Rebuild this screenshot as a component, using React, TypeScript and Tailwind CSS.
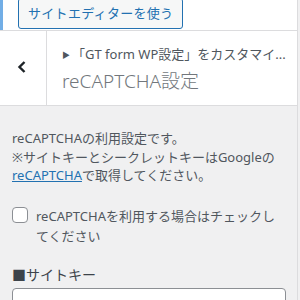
import React from 'react';

const font = { fontFamily: '"Noto Sans", "Noto Sans CJK JP", sans-serif' };

export default function App() {
  return (
    <div className="w-[300px] h-[300px] overflow-hidden bg-[#f0f0f1] flex" style={font}>
      <div className="w-[298px] shrink-0 border-r border-[#dcdcde] flex flex-col">
        {/* top strip with site editor button */}
        <div className="h-[31px] bg-white border-b border-[#dcdcde] flex shrink-0">
          <div className="w-[3px] bg-[#72aee6]" />
          <div className="pl-[15px]">
            <button className="mt-[-10px] h-[31px] px-[9px] rounded-[3px] border border-[#2271b1] bg-[#f6f7f7] text-[#2271b1] text-[13px] leading-[29px] tracking-[0.3px]">
              サイトエディターを使う
            </button>
          </div>
        </div>

        {/* section header */}
        <div className="h-[75px] bg-white border-b border-[#dcdcde] flex shrink-0">
          <div className="w-[47px] border-r border-[#dcdcde] flex items-center justify-center">
            <svg width="12" height="14" viewBox="0 0 12 14" className="ml-[-2px] mt-[-2px]">
              <path d="M8.5 2 L3.5 7 L8.5 12" fill="none" stroke="#1d2327" strokeWidth="2.4" />
            </svg>
          </div>
          <div className="pl-[15px] pt-[13px] min-w-0">
            <div className="text-[13px] leading-[20px] text-[#50575e] whitespace-nowrap">
              <span className="text-[8px] mr-[2px] align-[1px]">▶</span>「GT form WP設定」をカスタマイ...
            </div>
            <div className="text-[19px] font-light leading-[28px] text-[#72777c] mt-[2px]">reCAPTCHA設定</div>
          </div>
        </div>

        {/* controls */}
        <div className="px-[12px] pt-[23px] text-[13px] text-[#50575e]">
          <p className="leading-[18.5px]">
            reCAPTCHAの利用設定です。
            <br />
            ※サイトキーとシークレットキーはGoogleの
            <br />
            <a className="text-[#2271b1] underline">reCAPTCHA</a>で取得してください。
          </p>

          <label className="flex items-start gap-[8px] mt-[21px]">
            <span className="mt-[1px] w-[16px] h-[16px] shrink-0 rounded-[4px] border border-[#8c8f94] bg-white" />
            <span className="leading-[20px] text-[13px]">reCAPTCHAを利用する場合はチェックしてください</span>
          </label>

          <div className="mt-[19px] text-[14px] leading-[20px] text-[#3c434a]">■サイトキー</div>
          <div className="mt-[3px] h-[30px] w-[274px] rounded-[4px] border border-[#8c8f94] bg-white" />
        </div>
      </div>
    </div>
  );
}
